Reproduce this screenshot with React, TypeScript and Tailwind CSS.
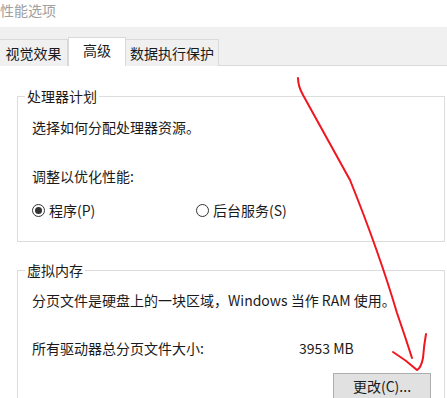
const font = { fontFamily: '"Noto Sans CJK SC", sans-serif' };

const Radio = ({ checked, label }: { checked?: boolean; label: string }) => (
  <div className="flex items-center gap-[4px]">
    <span className="flex h-[13px] w-[13px] items-center justify-center rounded-full border border-[#333333] bg-white">
      {checked && <span className="h-[7px] w-[7px] rounded-full bg-[#333333]" />}
    </span>
    <span>{label}</span>
  </div>
);

export default function App() {
  return (
    <div
      className="relative h-[398px] w-[447px] overflow-hidden bg-white text-[14px] leading-[20px] text-[#1a1a1a]"
      style={font}
    >
      <div className="h-[27px] text-[14px] leading-[20px] text-[#a0a0a0]">性能选项</div>

      <div className="flex h-[39px] items-end border-b border-[#d9d9d9] bg-[#f0f0f0]">
        <div className="-ml-px -mb-px flex h-[27px] w-[69px] items-center justify-center border border-b-0 border-[#d9d9d9] bg-[#f0f0f0]">
          视觉效果
        </div>
        <div className="-mb-px flex h-[29px] w-[58px] items-start justify-center border-x border-t border-[#d9d9d9] bg-white pt-[2px]">
          高级
        </div>
        <div className="-mb-px flex h-[27px] w-[93px] items-center justify-center border border-b-0 border-l-0 border-[#d9d9d9] bg-[#f0f0f0]">
          数据执行保护
        </div>
      </div>

      <div className="flex flex-col pl-[17px] pr-[2px]">
        <fieldset className="mt-[22px] h-[154px] border border-[#dcdcdc]">
          <legend className="ml-[7px] px-[2px] leading-[16px]">处理器计划</legend>
          <div className="px-[14px]">
            <div className="pt-[13px]">选择如何分配处理器资源。</div>
            <div className="mt-[29px]">调整以优化性能:</div>
            <div className="mt-[14px] flex">
              <div className="w-[164px]">
                <Radio checked label="程序(P)" />
              </div>
              <Radio label="后台服务(S)" />
            </div>
          </div>
        </fieldset>

        <fieldset className="mt-[20px] h-[160px] border border-[#dcdcdc]">
          <legend className="ml-[7px] px-[2px] leading-[16px]">虚拟内存</legend>
          <div className="pl-[14px] pr-[13px]">
            <div className="pt-[12px]">分页文件是硬盘上的一块区域，Windows 当作 RAM 使用。</div>
            <div className="mt-[28px] flex">
              <div className="w-[267px]">所有驱动器总分页文件大小:</div>
              <div>3953 MB</div>
            </div>
            <div className="mt-[15px] flex justify-end">
              <button className="h-[26px] w-[98px] border border-[#adadad] bg-[#e1e1e1] text-[14px] leading-[20px]">
                更改(C)...
              </button>
            </div>
          </div>
        </fieldset>
      </div>

      <svg
        className="pointer-events-none absolute left-0 top-0"
        width="447"
        height="398"
        viewBox="0 0 447 398"
        fill="none"
        stroke="#f0151e"
        strokeWidth="2"
        strokeLinecap="round"
        strokeLinejoin="round"
      >
        <path d="M298 78 Q298 86 303 95 L350 180 Q379 252 397 313 Q405 336 412 358" />
        <path d="M393 352 Q406 360 417 370 Q421 368 423 358 Q424 345 426 334" />
      </svg>
    </div>
  );
}
